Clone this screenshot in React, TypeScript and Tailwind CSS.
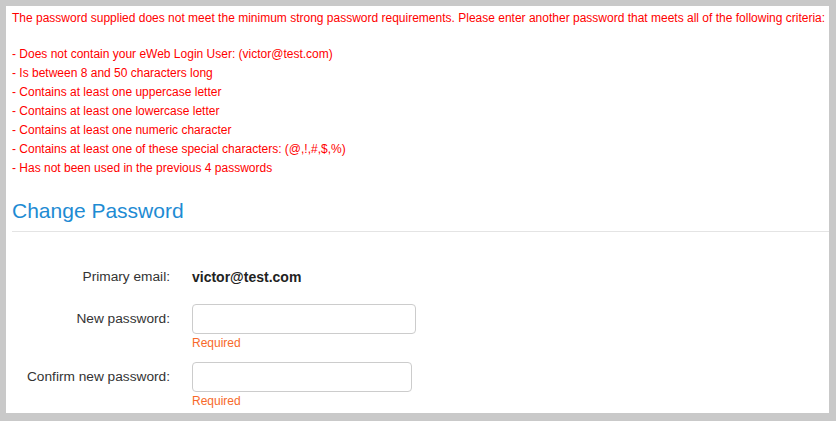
import React from "react";

const rules = [
  "- Does not contain your eWeb Login User: (victor@test.com)",
  "- Is between 8 and 50 characters long",
  "- Contains at least one uppercase letter",
  "- Contains at least one lowercase letter",
  "- Contains at least one numeric character",
  "- Contains at least one of these special characters: (@,!,#,$,%)",
  "- Has not been used in the previous 4 passwords",
];

export default function App() {
  return (
    <div
      className="w-[836px] h-[421px] bg-[#c9c9c9] pt-[6px] pl-[6px] overflow-hidden"
      style={{ fontFamily: '"Liberation Sans", Arial, sans-serif' }}
    >
      <div className="w-[823px] h-[407px] bg-white overflow-hidden pt-[3px] pl-[6px]">
        <div className="text-[12px] leading-[19px] text-[#ff0000]">
          <div className="whitespace-nowrap">
            The password supplied does not meet the minimum strong password requirements. Please enter another password that meets all of the following criteria:
          </div>
          <div className="h-[17px]" />
          {rules.map((r) => (
            <div key={r} className="whitespace-nowrap">
              {r}
            </div>
          ))}
        </div>

        <h2 className="mt-[20px] text-[21px] leading-[26px] text-[#1e8bd3] font-normal">
          Change Password
        </h2>
        <div className="mt-[7px] h-px bg-[#e4e4e4]" />

        <div className="mt-[35px] grid grid-cols-[158px_1fr] gap-x-[22px] text-[#333333]">
          <div className="text-right text-[13.7px] leading-[20px]">Primary email:</div>
          <div className="text-[14px] leading-[20px] font-bold text-[#222222]">victor@test.com</div>

          <div className="mt-[17px] h-[30px] flex items-center justify-end text-[13.7px]">
            New password:
          </div>
          <div className="mt-[17px]">
            <input
              type="password"
              className="block w-[224px] h-[30px] border border-[#cccccc] rounded-[4px] bg-white outline-none px-2"
            />
            <div className="mt-[1px] text-[12px] leading-[16px] text-[#f7692a]">Required</div>
          </div>

          <div className="mt-[11px] h-[30px] flex items-center justify-end text-[13.7px]">
            Confirm new password:
          </div>
          <div className="mt-[11px]">
            <input
              type="password"
              className="block w-[220px] h-[30px] border border-[#cccccc] rounded-[4px] bg-white outline-none px-2"
            />
            <div className="mt-[1px] text-[12px] leading-[16px] text-[#f7692a]">Required</div>
          </div>
        </div>
      </div>
    </div>
  );
}
